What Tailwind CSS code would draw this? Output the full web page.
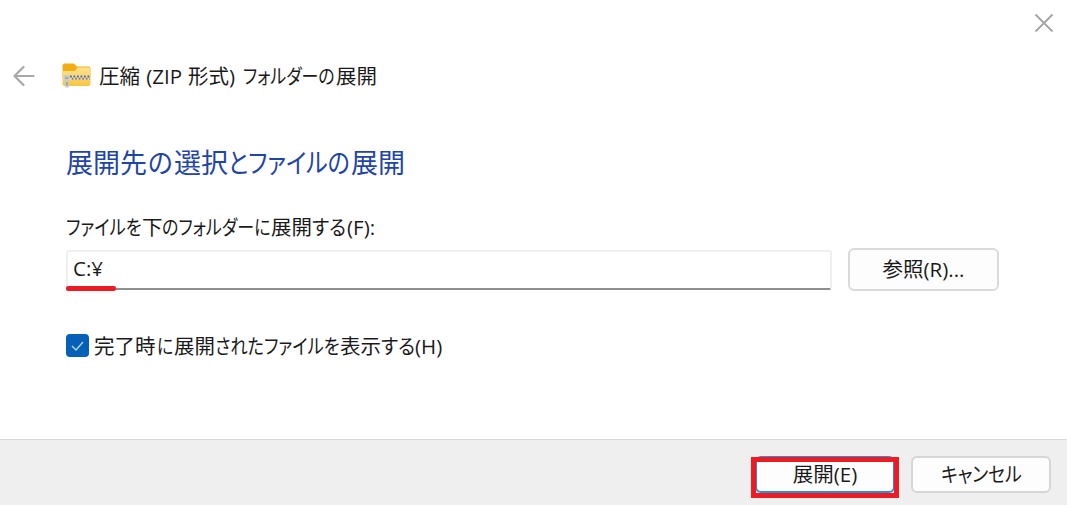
<!DOCTYPE html>
<html lang="ja">
<head>
<meta charset="utf-8">
<title>圧縮 (ZIP 形式) フォルダーの展開</title>
<script src="https://cdn.jsdelivr.net/npm/@tailwindcss/browser@4"></script>
</head>
<body class="h-[505px] w-[1067px] overflow-hidden bg-white font-['Open_Sans','Noto_Sans_CJK_JP',sans-serif] text-[20.5px] text-[#1a1a1a]">
<div class="flex h-full flex-col">
  <header class="flex h-[45px] shrink-0 items-start justify-end pt-[13px] pr-[13px]">
    <svg class="h-5 w-5" viewBox="0 0 20 20" fill="none" stroke="#a3a3a3" stroke-width="1.8"><path d="M1.5 1.5 18.5 18.5M18.5 1.5 1.5 18.5"/></svg>
  </header>
  <div class="flex h-[62px] shrink-0 items-center pl-[13px]">
    <svg class="h-[22px] w-[22px]" viewBox="0 0 22 22" fill="none" stroke="#a8a8a8" stroke-width="2.2" stroke-linecap="round" stroke-linejoin="round"><path d="M20.5 11H2M10.5 2 1.5 11l9 9"/></svg>
    <svg class="ml-[27px] h-[26px] w-[29px]" viewBox="0 0 29 26">
      <defs><linearGradient id="f" x1="0" y1="0" x2="0" y2="1"><stop offset="0" stop-color="#ffe391"/><stop offset="1" stop-color="#f9c43f"/></linearGradient></defs>
      <path d="M.5 3Q.5 .5 3 .5h8q1 0 2 1l2 2H26.500q2 0 2 2v9H.5z" fill="#f1ad16"/>
      <path d="M.5 8h11.500q1 0 2-1l1.500-2.500H26.500q2 0 2 2V21q0 2-2 2H2.500q-2 0-2-2z" fill="url(#f)"/>
      <path d="M7 14.500H28" stroke="#e6dcc0" stroke-width="5"/>
      <path d="M8 13.500H28" stroke="#6f6650" stroke-width="2" stroke-dasharray="1.800 1.700"/>
      <path d="M9.700 15.700H28" stroke="#8d8366" stroke-width="2" stroke-dasharray="1.800 1.700"/>
      <path d="M1.500 13q0-1 1-1h4.500q1 0 1 1v3l-1 1v6q0 1.500-1 1.500H4q-1 0-1-1.500v-6l-1.500-1z" fill="#cbcbcb"/>
      <path d="M3 15h3.500M5 19v3.500" stroke="#9b9b9b" stroke-width="1.600"/>
    </svg>
    <p class="ml-[8px] flex h-[30px] items-center whitespace-pre leading-[30px]"><span class="w-[42px]">圧縮</span><span class="w-[47px]"> (ZIP </span><span class="w-[41px]">形式</span><span class="w-[14px]">) </span><span class="w-[93px]"><span class="inline-block w-max origin-left scale-x-[0.825] [font-feature-settings:'palt']">フォルダーの</span></span><span class="w-[42px]">展開</span></p>
  </div>
  <main class="flex h-[332px] shrink-0 flex-col pl-[66px]">
    <h1 class="mt-[36px] flex h-[40px] items-center whitespace-pre text-[27px] leading-[40px] text-[#1f45a5]"><span class="w-[82px]">展開先</span><span class="w-[26px]"><span class="inline-block w-max origin-left scale-x-[0.95] [font-feature-settings:'palt']">の</span></span><span class="w-[54px]">選択</span><span class="w-[123px]"><span class="inline-block w-max origin-left scale-x-[0.85] [font-feature-settings:'palt']">とファイルの</span></span><span class="w-[55px]">展開</span></h1>
    <div class="mt-[29px] flex h-[30px] items-center whitespace-pre leading-[30px]"><span class="w-[76px]"><span class="inline-block w-max origin-left scale-x-[0.84] [font-feature-settings:'palt']">ファイルを</span></span><span class="w-[20px]">下</span><span class="w-[109px]"><span class="inline-block w-max origin-left scale-x-[0.83] [font-feature-settings:'palt']">のフォルダーに</span></span><span class="w-[41px]">展開</span><span class="w-[35px]"><span class="inline-block w-max origin-left scale-x-[0.92] [font-feature-settings:'palt']">する</span></span><span class="w-[31px]">(F):</span></div>
    <div class="mt-[6px] flex h-[43px] items-start">
      <div class="relative mt-[2px] h-[40px] w-[766px] rounded-[3px] border-2 border-[#efefef] border-b-[#8f8f8f] bg-white pl-[5px]">
        <span class="block leading-[33px]">C:¥</span>
        <span class="absolute -bottom-[3px] -left-[2px] h-[5px] w-[50px] rounded-[2px] bg-[#ed1c24]"></span>
      </div>
      <button class="ml-[16px] flex h-[43px] w-[151px] items-center justify-center rounded-[6px] border-2 border-[#dadada] bg-[#fdfdfd] whitespace-pre">参照(R)...</button>
    </div>
    <div class="mt-[39px] flex h-[30px] items-center whitespace-pre leading-[30px]">
      <svg class="h-[23px] w-[23px]" viewBox="0 0 23 23"><rect width="23" height="23" rx="4" fill="#0560b8"/><path d="m6 12 4 4 7-8" fill="none" stroke="#b5d2ec" stroke-width="1.500"/></svg><span class="ml-[5px] mt-px flex"><span class="w-[63px]">完了時</span><span class="w-[17px]"><span class="inline-block w-max origin-left scale-x-[0.83] [font-feature-settings:'palt']">に</span></span><span class="w-[41px]">展開</span><span class="w-[125px]"><span class="inline-block w-max origin-left scale-x-[0.84] [font-feature-settings:'palt']">されたファイルを</span></span><span class="w-[41px]">表示</span><span class="w-[34px]"><span class="inline-block w-max origin-left scale-x-[0.92] [font-feature-settings:'palt']">する</span></span><span class="w-[30px]">(H)</span></span></div>
  </main>
  <footer class="flex grow items-start justify-end border-t border-[#d9d9d9] bg-[#efefef] pt-[16px] pr-[16px]">
    <div class="relative">
      <button class="flex h-[37px] w-[140px] items-center justify-center rounded-[6px] border-2 border-[#2e8bd8] bg-[#fdfdfd] whitespace-pre">展開(E)</button>
      <span class="absolute top-px -left-[4px] h-[41px] w-[148px] border-5 border-[#ed1c24]"></span>
    </div>
    <button class="ml-[16px] flex h-[37px] w-[140px] items-center justify-center rounded-[6px] border-2 border-[#d6d6d6] bg-[#fdfdfd]"><span class="inline-block w-max scale-x-[0.87] [font-feature-settings:'palt']">キャンセル</span></button>
  </footer>
</div>
</body>
</html>
